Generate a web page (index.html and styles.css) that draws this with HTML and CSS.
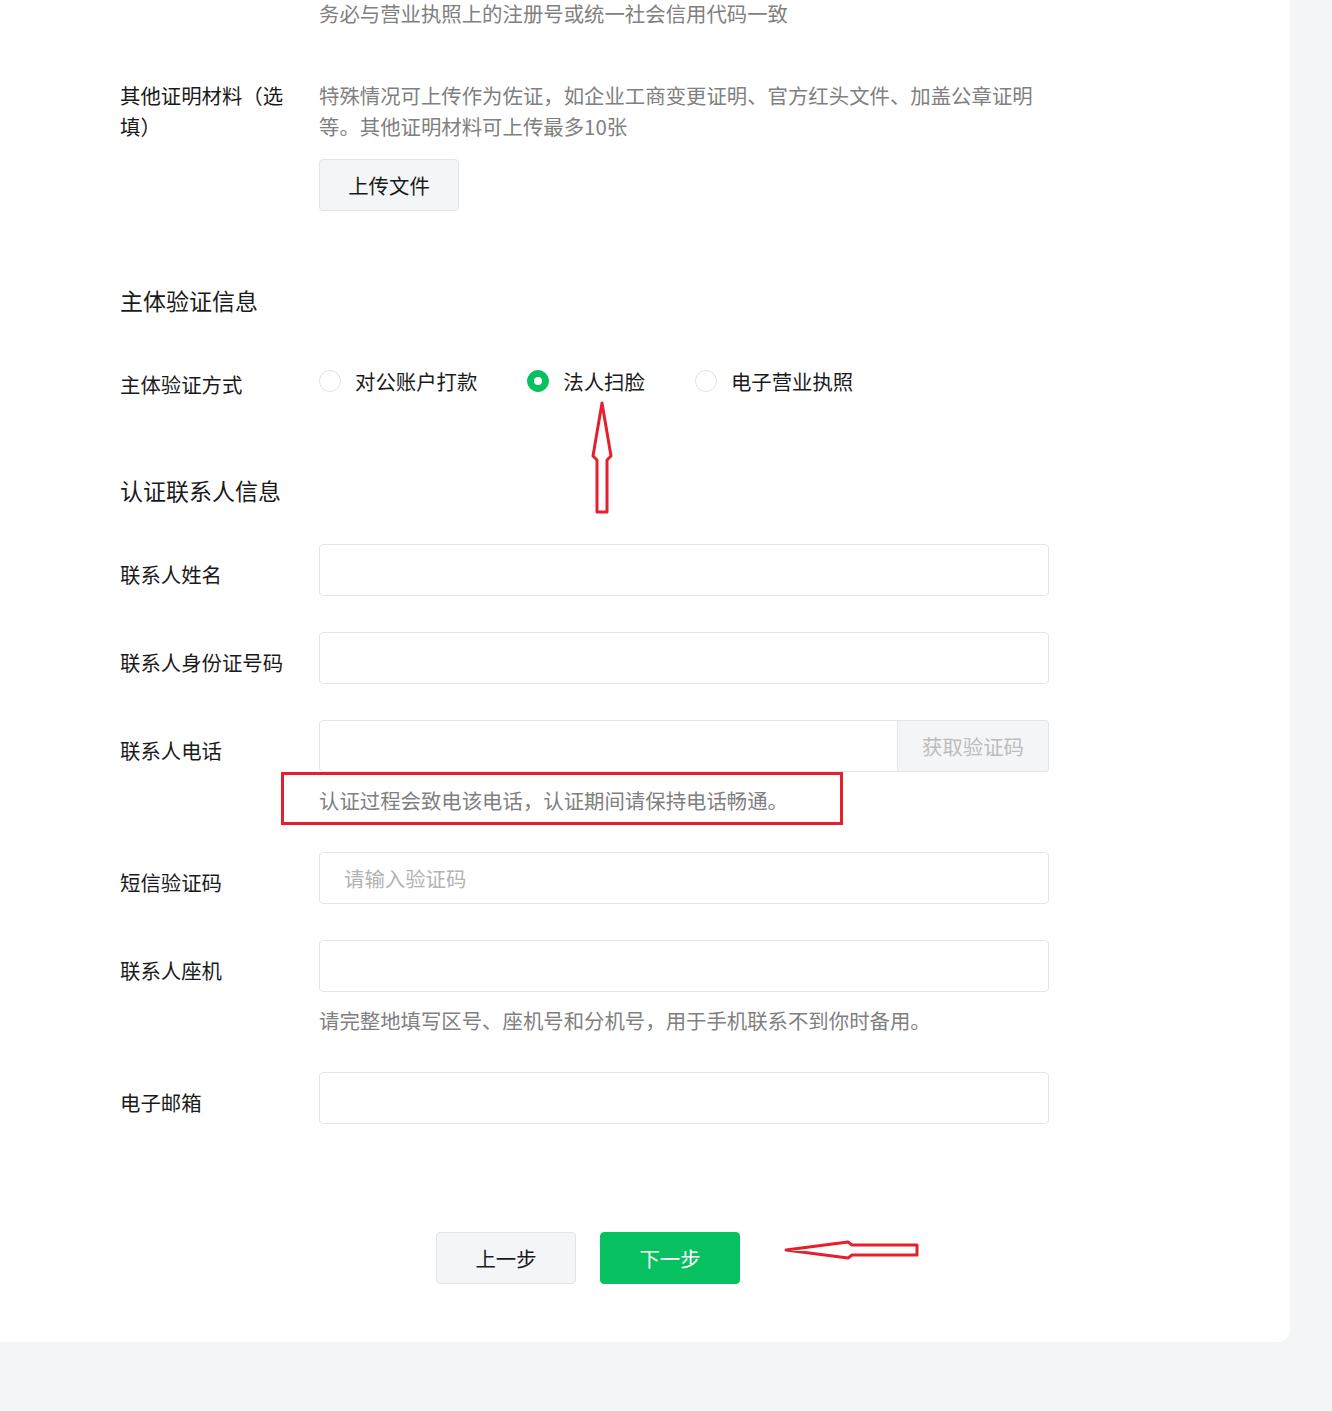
FILE: index.html
```html
<!DOCTYPE html>
<html lang="zh-CN">
  <head>
    <meta charset="UTF-8" />
    <meta name="viewport" content="width=device-width, initial-scale=1.0" />
    <title>认证信息</title>
    <link rel="stylesheet" href="styles.css">
  </head>
  <body>
    <div class="card">
      <!-- 证件信息（续） -->
      <div class="row row-top">
        <div class="label"></div>
        <div class="field">
          <p class="hint">务必与营业执照上的注册号或统一社会信用代码一致</p>
        </div>
      </div>

      <div class="row row-other">
        <div class="label">其他证明材料（选填）</div>
        <div class="field">
          <p class="hint">特殊情况可上传作为佐证，如企业工商变更证明、官方红头文件、加盖公章证明等。其他证明材料可上传最多10张</p>
          <button class="btn btn-upload">上传文件</button>
        </div>
      </div>

      <!-- 主体验证信息 -->
      <h2 class="section-title">主体验证信息</h2>
      <div class="row row-radio">
        <div class="label">主体验证方式</div>
        <div class="field radios">
          <label class="radio"><span class="dot"></span>对公账户打款</label>
          <label class="radio checked"><span class="dot"></span>法人扫脸</label>
          <label class="radio"><span class="dot"></span>电子营业执照</label>
        </div>
      </div>

      <!-- 认证联系人信息 -->
      <h2 class="section-title section-contact">认证联系人信息</h2>
      <div class="contact">
        <div class="row">
          <div class="label label-input">联系人姓名</div>
          <div class="field"><input class="input" type="text" /></div>
        </div>
        <div class="row">
          <div class="label label-input">联系人身份证号码</div>
          <div class="field"><input class="input" type="text" /></div>
        </div>
        <div class="row">
          <div class="label label-input">联系人电话</div>
          <div class="field">
            <div class="input-group">
              <input class="input" type="text" />
              <button class="btn-code">获取验证码</button>
            </div>
            <p class="hint hint-below">认证过程会致电该电话，认证期间请保持电话畅通。</p>
          </div>
        </div>
        <div class="row">
          <div class="label label-input">短信验证码</div>
          <div class="field"><input class="input" type="text" placeholder="请输入验证码" /></div>
        </div>
        <div class="row">
          <div class="label label-input">联系人座机</div>
          <div class="field">
            <input class="input" type="text" />
            <p class="hint hint-below">请完整地填写区号、座机号和分机号，用于手机联系不到你时备用。</p>
          </div>
        </div>
        <div class="row">
          <div class="label label-input">电子邮箱</div>
          <div class="field"><input class="input" type="text" /></div>
        </div>
      </div>

      <div class="actions">
        <button class="btn btn-prev">上一步</button>
        <button class="btn btn-next">下一步</button>
      </div>

      <!-- 标注 -->
      <div class="mark-box"></div>
      <svg class="marks" width="1290" height="1341" viewBox="0 0 1290 1341">
        <polygon points="602,405 611,458 607,462 607,514 597,514 597,462 593,458" />
        <polygon points="786,1252 848,1244 852,1247 917,1247 917,1257 852,1257 848,1260" />
      </svg>
    </div>
  </body>
</html>
```

FILE: styles.css
```css
body {
  margin: 0;
  background-color: #f4f5f7;
  font-family: "Noto Sans CJK SC", "Noto Sans", sans-serif;
  font-size: 20.4px;
  color: #1a1a1a;
}

p {
  margin: 0;
}

.card {
  position: relative;
  width: 1290px;
  box-sizing: border-box;
  padding: 0 0 58px 120px;
  background-color: #fff;
  border-radius: 0 0 12px 0;
}

.row {
  display: flex;
}

.label {
  width: 179px;
  padding-right: 20px;
  line-height: 31px;
  flex-shrink: 0;
}

.label-input {
  padding-top: 15px;
}

.field {
  width: 730px;
}

.hint {
  color: #808080;
  line-height: 31px;
}

.row-top {
  margin-top: -2px;
}

.row-other {
  margin-top: 51px;
}

.btn {
  font-family: inherit;
  font-size: 20.4px;
  width: 140px;
  height: 52px;
  border-radius: 4px;
  cursor: pointer;
}

.btn-upload {
  display: block;
  margin-top: 17px;
  background-color: #f4f5f7;
  border: 1px solid #e3e4e6;
  color: #1a1a1a;
}

.section-title {
  margin: 73px 0 0;
  font-size: 23px;
  font-weight: normal;
  line-height: 32px;
}

.section-contact {
  margin-top: 74px;
}

.row-radio {
  margin-top: 53px;
}

.radios {
  display: flex;
  align-items: flex-start;
  gap: 50px;
  line-height: 24px;
}

.radio {
  display: flex;
  align-items: center;
  gap: 14px;
}

.radio .dot {
  width: 22px;
  height: 22px;
  box-sizing: border-box;
  border: 1px solid #e2e2e2;
  border-radius: 50%;
  display: flex;
  align-items: center;
  justify-content: center;
}

.radio.checked .dot {
  background-color: #07c160;
  border-color: #07c160;
}

.radio.checked .dot::after {
  content: "";
  width: 8px;
  height: 8px;
  border-radius: 50%;
  background-color: #fff;
}

.contact {
  margin-top: 38px;
  display: flex;
  flex-direction: column;
  gap: 36px;
}

.input {
  display: block;
  width: 100%;
  height: 52px;
  box-sizing: border-box;
  padding: 0 24px;
  border: 1px solid #e3e4e6;
  border-radius: 4px;
  font-family: inherit;
  font-size: 20.4px;
  color: #1a1a1a;
  outline: none;
}

.input::placeholder {
  color: #b3b3b3;
}

.input-group {
  display: flex;
}

.input-group .input {
  border-radius: 4px 0 0 4px;
}

.btn-code {
  width: 151px;
  flex-shrink: 0;
  height: 52px;
  border: 1px solid #e3e4e6;
  border-left: none;
  border-radius: 0 4px 4px 0;
  background-color: #f4f5f7;
  color: #bcbcbc;
  font-family: inherit;
  font-size: 20.4px;
}

.hint-below {
  margin-top: 13px;
}

.actions {
  display: flex;
  gap: 24px;
  margin-top: 108px;
  padding-left: 316px;
}

.btn-prev {
  background-color: #f4f5f7;
  border: 1px solid #e3e4e6;
  color: #1a1a1a;
}

.btn-next {
  background-color: #07c160;
  border: 1px solid #07c160;
  color: #fff;
}

/* red annotation marks over the form */
.mark-box {
  position: absolute;
  left: 281px;
  top: 774px;
  width: 562px;
  height: 53px;
  box-sizing: border-box;
  border: 3px solid #e3202b;
}

.marks {
  position: absolute;
  left: 0;
  top: 0;
  pointer-events: none;
}

.marks polygon {
  fill: none;
  stroke: #e3202b;
  stroke-width: 3;
  stroke-linejoin: round;
}
```
